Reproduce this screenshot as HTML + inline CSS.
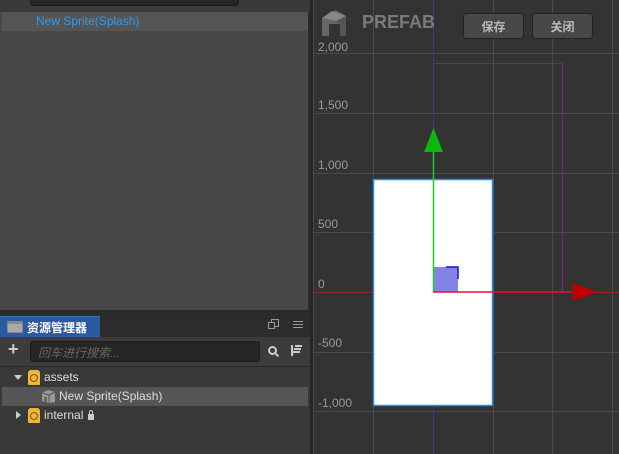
<!DOCTYPE html>
<html><head><meta charset="utf-8"><style>
*{margin:0;padding:0;box-sizing:border-box}
body{width:619px;height:454px;overflow:hidden;background:#2d2d2d;font-family:"Liberation Sans","Noto Sans CJK SC",sans-serif;position:relative}
.abs{position:absolute}
</style></head><body>
<div class="abs" style="left:0;top:0;width:310px;height:312px;background:#484848;border-right:2px solid #2a2a2a"></div>
<div class="abs" style="left:0;top:0;width:310px;height:12px;background:#3a3a3a"></div>
<div class="abs" style="left:30px;top:-8px;width:209px;height:14px;background:#262626;border:1px solid #1a1a1a;border-radius:3px"></div>
<div class="abs" style="left:2px;top:12px;width:306px;height:19px;background:#555"></div>
<div class="abs" style="left:36px;top:14px;font-size:12px;color:#2d9cf5">New Sprite(Splash)</div>
<div class="abs" style="left:0;top:310px;width:310px;height:3px;background:#2a2a2a"></div>
<div class="abs" style="left:0;top:313px;width:310px;height:24px;background:#2c2c2c"></div>
<div class="abs" style="left:0;top:316px;width:100px;height:21px;background:#2b5aa0;border-top:1px solid #3d72c0"></div>
<div class="abs" style="left:7px;top:321px;width:16px;height:12px;background:#888;border-radius:1px"></div>
<div class="abs" style="left:8px;top:324px;width:14px;height:8px;background:#aaa"></div>
<div class="abs" style="left:27px;top:319px;font-size:12px;color:#fff;font-weight:bold">资源管理器</div>
<div class="abs" style="left:271px;top:319px;width:8px;height:8px;border:1px solid #999"></div>
<div class="abs" style="left:268px;top:322px;width:7px;height:7px;border:1px solid #999;background:#2c2c2c"></div>
<div class="abs" style="left:293px;top:321px;width:10px;height:1px;background:#999;box-shadow:0 3px #999,0 6px #999"></div>
<div class="abs" style="left:0;top:337px;width:310px;height:117px;background:#383838"></div>
<div class="abs" style="left:0;top:337px;width:310px;height:30px;background:#3c3c3c;border-bottom:1px solid #2a2a2a"></div>
<div class="abs" style="left:8px;top:339px;font-size:18px;color:#ccc;font-weight:bold">+</div>
<div class="abs" style="left:30px;top:341px;width:230px;height:21px;background:#262626;border:1px solid #1c1c1c;border-radius:3px"></div>
<div class="abs" style="left:38px;top:344px;font-size:12px;color:#666;font-style:italic">回车进行搜索...</div>
<div class="abs" style="left:268px;top:346px;width:9px;height:9px;border:2px solid #ccc;border-radius:50%"></div>
<div class="abs" style="left:275px;top:354px;width:4px;height:2px;background:#ccc;transform:rotate(45deg)"></div>
<div class="abs" style="left:291px;top:345px;width:2px;height:11px;background:#ccc"></div>
<div class="abs" style="left:295px;top:345px;width:7px;height:2px;background:#ccc;box-shadow:-1px 3px #ccc,-2px 6px #ccc"></div>
<div class="abs" style="left:2px;top:387px;width:306px;height:19px;background:#555"></div>
<div class="abs" style="left:14px;top:375px;width:0;height:0;border-left:4px solid transparent;border-right:4px solid transparent;border-top:5px solid #ccc"></div>
<div class="abs" style="left:28px;top:370px;width:12px;height:15px;background:#f0b63a;border-radius:3px 3px 1px 1px"></div>
<div class="abs" style="left:30px;top:374px;width:8px;height:8px;border:1.5px solid #7a5410;border-radius:50%"></div>
<div class="abs" style="left:44px;top:370px;font-size:12px;color:#ddd">assets</div>
<svg class="abs" style="left:41px;top:389px" width="15" height="15"><path d="M1,4 L7,1 L14,3 L14,13 L8,14 L1,12 Z" fill="#999"/><path d="M1,4 L8,6 L14,3 M8,6 L8,14" stroke="#555" fill="none"/><rect x="3" y="8" width="3" height="5" fill="#666"/></svg>
<div class="abs" style="left:59px;top:389px;font-size:12px;color:#ddd">New Sprite(Splash)</div>
<div class="abs" style="left:16px;top:411px;width:0;height:0;border-top:4px solid transparent;border-bottom:4px solid transparent;border-left:5px solid #ccc"></div>
<div class="abs" style="left:28px;top:408px;width:12px;height:15px;background:#f0b63a;border-radius:3px 3px 1px 1px"></div>
<div class="abs" style="left:30px;top:412px;width:8px;height:8px;border:1.5px solid #7a5410;border-radius:50%"></div>
<div class="abs" style="left:44px;top:408px;font-size:12px;color:#ddd">internal</div>
<div class="abs" style="left:88px;top:414px;width:6px;height:6px;background:#ccc"></div>
<div class="abs" style="left:89px;top:410px;width:4px;height:5px;border:1px solid #ccc;border-radius:2px 2px 0 0"></div>
<svg class="abs" style="left:310px;top:0" width="309" height="454">
<rect x="0" y="0" width="309" height="454" fill="#333"/>
<rect x="0" y="0" width="3" height="454" fill="#262626"/>
<g stroke="#4a4a4a" stroke-width="1">
<line x1="3" y1="53.5" x2="309" y2="53.5"/><line x1="3" y1="113.5" x2="309" y2="113.5"/><line x1="3" y1="173.5" x2="309" y2="173.5"/><line x1="3" y1="232.5" x2="309" y2="232.5"/><line x1="3" y1="352.5" x2="309" y2="352.5"/><line x1="3" y1="411.5" x2="309" y2="411.5"/>
<line x1="63.5" y1="0" x2="63.5" y2="454"/><line x1="183.5" y1="0" x2="183.5" y2="454"/><line x1="242.5" y1="0" x2="242.5" y2="454"/><line x1="302.5" y1="0" x2="302.5" y2="454"/>
<line x1="3.5" y1="0" x2="3.5" y2="454"/>
</g>
<line x1="3" y1="292.5" x2="309" y2="292.5" stroke="#8a2a2a"/>
<line x1="123.5" y1="0" x2="123.5" y2="454" stroke="#3a3a8a"/>
<polyline points="123.5,63.5 252.5,63.5 252.5,292" fill="none" stroke="#8a1a8a"/>
<rect x="63.5" y="179.5" width="119" height="226" fill="#fff" stroke="#1e90e8" stroke-width="1.5"/>
<rect x="124" y="267" width="24" height="25" fill="#8484e6"/>
<polyline points="136,267 148,267 148,279" fill="none" stroke="#1010e0" stroke-width="1.5"/>
<line x1="123.5" y1="292" x2="123.5" y2="150" stroke="#22cc22" stroke-width="1.5"/>
<polygon points="123.5,128 114,152 133,152" fill="#0db80d"/>
<line x1="123" y1="292" x2="265" y2="292" stroke="#e0103a" stroke-width="1.5"/>
<polygon points="287,292 263,283 263,301" fill="#c00000"/>
<g font-family="Liberation Sans,sans-serif" font-size="12" fill="#999">
<text x="8" y="51">2,000</text><text x="8" y="109">1,500</text><text x="8" y="169">1,000</text><text x="8" y="228">500</text><text x="8" y="288">0</text><text x="8" y="347">-500</text><text x="8" y="407">-1,000</text>
</g>
<path d="M12,18 L12,36 L19,36 L19,24 L30,24 L30,36 L36,36 L36,16 L26,10 Z" fill="#666"/>
<path d="M12,18 L22,11 L36,16 L26,21 Z" fill="#888"/>
<path d="M26,21 L36,16 L36,36 L30,36 L30,24 Z" fill="#555"/>
<text x="52" y="28" font-family="Liberation Sans,sans-serif" font-size="18" font-weight="bold" fill="#7a7a7a">PREFAB</text>
<rect x="153.5" y="13.5" width="60" height="25" rx="3" fill="#484848" stroke="#222"/>
<rect x="222.5" y="13.5" width="60" height="25" rx="3" fill="#484848" stroke="#222"/>
<text x="183.5" y="31" text-anchor="middle" font-family="Liberation Sans,Noto Sans CJK SC,sans-serif" font-size="12" font-weight="bold" fill="#bbb">保存</text>
<text x="252.5" y="31" text-anchor="middle" font-family="Liberation Sans,Noto Sans CJK SC,sans-serif" font-size="12" font-weight="bold" fill="#bbb">关闭</text>
</svg>
</body></html>
